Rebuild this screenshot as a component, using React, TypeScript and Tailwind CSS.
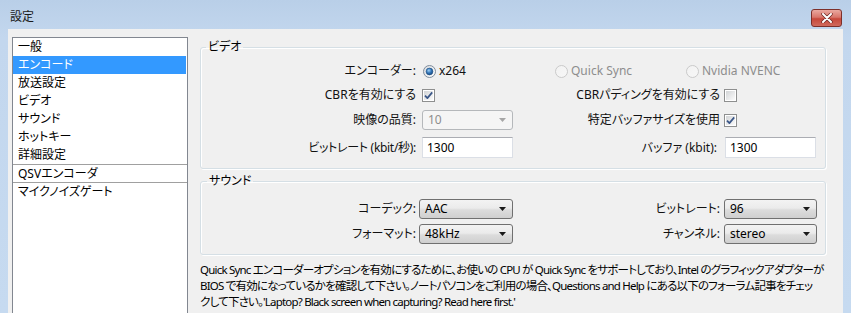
import React, { useId } from "react";

function Radio({ checked, disabled }: { checked?: boolean; disabled?: boolean }) {
  const id = useId().replace(/:/g, "");
  return (
    <svg width="13" height="13" viewBox="0 0 13 13" className="shrink-0 block">
      <defs>
        <linearGradient id={`o${id}`} x1="0" y1="0" x2="1" y2="1">
          <stop offset="0" stopColor={disabled ? "#f2f2f2" : "#d6d9dd"} />
          <stop offset="1" stopColor={disabled ? "#f7f7f7" : "#ffffff"} />
        </linearGradient>
        <radialGradient id={`d${id}`} cx="0.4" cy="0.35" r="0.7">
          <stop offset="0" stopColor="#9fd0f5" />
          <stop offset="0.55" stopColor="#2f72b5" />
          <stop offset="1" stopColor="#1a4a80" />
        </radialGradient>
      </defs>
      <circle cx="6.5" cy="6.5" r="6" fill={`url(#o${id})`} stroke={disabled ? "#c9c9c9" : "#7f8d9c"} strokeWidth="1" />
      {checked && <circle cx="6.5" cy="6.5" r="3.4" fill={`url(#d${id})`} stroke="#1b4b7e" strokeWidth="0.6" />}
    </svg>
  );
}

function Checkbox({ checked }: { checked?: boolean }) {
  const id = useId().replace(/:/g, "");
  return (
    <svg width="13" height="13" viewBox="0 0 13 13" className="shrink-0 block">
      <defs>
        <linearGradient id={`c${id}`} x1="0" y1="0" x2="1" y2="1">
          <stop offset="0" stopColor="#d2d4d6" />
          <stop offset="1" stopColor="#fbfbfb" />
        </linearGradient>
      </defs>
      <rect x="0.5" y="0.5" width="12" height="12" fill="#ffffff" stroke="#8e8f8f" />
      <rect x="2" y="2" width="9" height="9" fill={`url(#c${id})`} />
      {checked && (
        <path d="M3 6.6 L5.4 9.1 L10.2 3.4" fill="none" stroke="#3a5687" strokeWidth="1.7" strokeLinejoin="round" />
      )}
    </svg>
  );
}

function Arrow({ color }: { color: string }) {
  return (
    <svg width="7" height="4" viewBox="0 0 7 4" className="block">
      <path d="M0 0 H7 L3.5 4 Z" fill={color} />
    </svg>
  );
}

function Combo({ value, className }: { value: string; className: string }) {
  return (
    <div
      className={`h-[20px] rounded-[3px] border border-[#707070] bg-[linear-gradient(#f3f3f3,#ebebeb_45%,#dcdcdc_55%,#cfcfcf)] flex items-center justify-between pl-[5px] pr-[6px] text-black ${className}`}
    >
      <span>{value}</span>
      <Arrow color="#1a1a1a" />
    </div>
  );
}

function TextInput({ value }: { value: string }) {
  return (
    <div className="w-[91px] h-[21px] border border-[#dbdfe6] border-t-[#abadb3] bg-white flex items-center pl-[4px] text-black">
      {value}
    </div>
  );
}

const items = ["一般", "エンコード", "放送設定", "ビデオ", "サウンド", "ホットキー", "詳細設定"];

export default function App() {
  return (
    <div className="w-[851px] h-[313px] overflow-hidden flex flex-col bg-[linear-gradient(#b9cfe8,#c3d7ee_12%,#c6daf0)] text-[12px] text-[#111] font-['Noto_Sans','Noto_Sans_CJK_JP',sans-serif] [font-feature-settings:'palt']">
      {/* Title bar */}
      <div className="h-[29px] flex items-start justify-between pl-[10px] pr-[9px] shrink-0">
        <span className="mt-[8px] text-[12px] leading-[18px] text-[#1a1a1a]">設定</span>
        <div className="mt-[9px] w-[31px] h-[18px] rounded-[3px] border border-[#7d302a] bg-[linear-gradient(#eaa9a0,#d9766b_45%,#c7483b_55%,#d06a5c)] flex items-center justify-center">
          <svg width="12" height="10" viewBox="0 0 12 10" className="block">
            <path d="M2 1 L10 9 M10 1 L2 9" stroke="#6b2722" strokeWidth="3.4" strokeLinecap="round" />
            <path d="M2 1 L10 9 M10 1 L2 9" stroke="#ffffff" strokeWidth="2" strokeLinecap="round" />
          </svg>
        </div>
      </div>

      {/* Client area */}
      <div className="flex-1 mx-[8px] bg-[#f0f0f0] flex items-start pl-[4px] pt-[8px]">
        {/* List box */}
        <div className="w-[176px] h-[300px] shrink-0 border border-[#828790] bg-white flex flex-col">
          {items.map((it, i) => (
            <div
              key={it}
              className={`h-[18px] leading-[18px] pl-[5px] mr-[1px] ${i === 1 ? "bg-[#3399ff] text-white" : "text-black"}`}
            >
              {it}
            </div>
          ))}
          <div className="h-[1px] bg-[#a0a0a0]" />
          <div className="h-[17px] leading-[17px] pl-[5px] text-black">QSVエンコーダ</div>
          <div className="h-[1px] bg-[#a0a0a0]" />
          <div className="h-[18px] leading-[18px] pl-[5px] text-black">マイクノイズゲート</div>
        </div>

        {/* Right panel */}
        <div className="ml-[12px] mt-[2px] w-[626px] flex flex-col">
          {/* Video group */}
          <fieldset className="border border-[#d5dfe5] rounded-[3px] pb-[10px] shadow-[1px_1px_0_#ffffff,inset_1px_1px_0_#ffffff]">
            <legend className="ml-[5px] px-[2px] leading-[16px] text-black">ビデオ</legend>
            <div className="flex items-center h-[20px] mt-[6px]">
              <div className="w-[215px] text-right">エンコーダー:</div>
              <div className="w-[139px] pl-[7px] flex items-center gap-[3px]">
                <Radio checked />
                <span>x264</span>
              </div>
              <div className="w-[131px] flex items-center gap-[3px] text-[#8d8d8d]">
                <Radio disabled />
                <span>Quick Sync</span>
              </div>
              <div className="flex items-center gap-[3px] text-[#8d8d8d]">
                <Radio disabled />
                <span>Nvidia NVENC</span>
              </div>
            </div>
            <div className="flex items-center h-[20px] mt-[4px]">
              <div className="w-[215px] text-right">CBRを有効にする</div>
              <div className="w-[98px] pl-[6px]">
                <Checkbox checked />
              </div>
              <div className="w-[206px] text-right">CBRパディングを有効にする</div>
              <div className="pl-[4px]">
                <Checkbox />
              </div>
            </div>
            <div className="flex items-center h-[20px] mt-[5px]">
              <div className="w-[215px] text-right">映像の品質:</div>
              <div className="w-[98px] pl-[6px]">
                <div className="w-[91px] h-[20px] rounded-[3px] border border-[#b5b8bb] bg-[#f5f5f5] flex items-center justify-between pl-[5px] pr-[6px] text-[#8d8d8d]">
                  <span>10</span>
                  <Arrow color="#a6a6a6" />
                </div>
              </div>
              <div className="w-[206px] text-right">特定バッファサイズを使用</div>
              <div className="pl-[4px]">
                <Checkbox checked />
              </div>
            </div>
            <div className="flex items-center h-[21px] mt-[7px]">
              <div className="w-[215px] text-right tracking-[-0.3px]">ビットレート (kbit/秒):</div>
              <div className="w-[98px] pl-[6px]">
                <TextInput value="1300" />
              </div>
              <div className="w-[206px] text-right pr-[3px]">バッファ (kbit):</div>
              <div className="pl-[5px]">
                <TextInput value="1300" />
              </div>
            </div>
          </fieldset>

          {/* Sound group */}
          <fieldset className="mt-[4px] border border-[#d5dfe5] rounded-[3px] pb-[10px] shadow-[1px_1px_0_#ffffff,inset_1px_1px_0_#ffffff]">
            <legend className="ml-[6px] px-[2px] leading-[16px] text-black">サウンド</legend>
            <div className="flex items-center h-[20px] mt-[10px]">
              <div className="w-[215px] text-right">コーデック:</div>
              <div className="w-[98px] pl-[3px]">
                <Combo value="AAC" className="w-[94px]" />
              </div>
              <div className="w-[206px] text-right">ビットレート:</div>
              <div className="pl-[4px]">
                <Combo value="96" className="w-[93px]" />
              </div>
            </div>
            <div className="flex items-center h-[20px] mt-[5px]">
              <div className="w-[215px] text-right">フォーマット:</div>
              <div className="w-[98px] pl-[3px]">
                <Combo value="48kHz" className="w-[94px]" />
              </div>
              <div className="w-[206px] text-right">チャンネル:</div>
              <div className="pl-[4px]">
                <Combo value="stereo" className="w-[93px]" />
              </div>
            </div>
          </fieldset>

          {/* Note text */}
          <div className="mt-[7px] text-[11.5px] leading-[16px] tracking-[-0.8px] text-black whitespace-nowrap">
            <div>Quick Sync エンコーダーオプションを有効にするために、お使いの CPU が Quick Sync をサポートしており、Intel のグラフィックアダプターが</div>
            <div>BIOS で有効になっているかを確認して下さい。ノートパソコンをご利用の場合、Questions and Help にある以下のフォーラム記事をチェッ</div>
            <div>クして下さい。'Laptop? Black screen when capturing? Read here first.'</div>
          </div>
        </div>
      </div>
    </div>
  );
}
